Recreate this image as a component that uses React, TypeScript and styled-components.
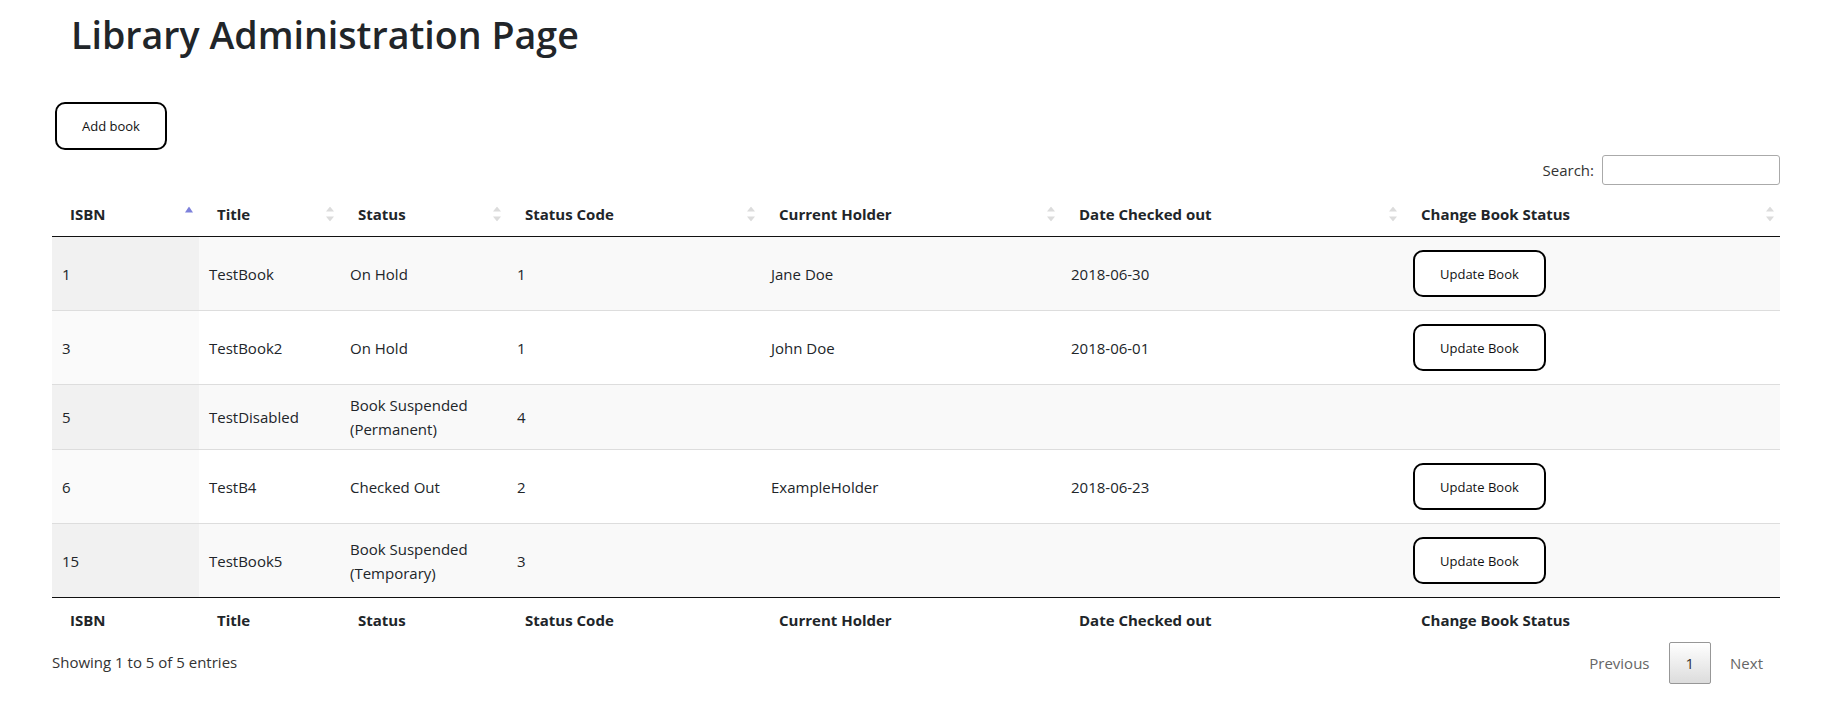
import React from "react";
import styled, { createGlobalStyle } from "styled-components";

const GlobalStyle = createGlobalStyle`
  html, body {
    margin: 0;
    padding: 0;
    background: #ffffff;
  }
  body {
    font-family: "Open Sans", "Noto Sans", sans-serif;
    font-size: 15px;
    line-height: 24px;
    color: #212529;
  }
  * { box-sizing: border-box; }
`;

const Page = styled.div`
  padding: 0 44px 0 52px;
`;

const Title = styled.h1`
  margin: 0;
  padding: 9px 0 0 19px;
  font-size: 37.6px;
  font-weight: 600;
  line-height: 52px;
  color: #212529;
`;

const Toolbar = styled.div`
  display: flex;
  margin-top: 41px;
  padding-left: 3px;
`;

const OutlineButton = styled.button`
  height: 48px;
  padding: 0 25px;
  border: 2px solid #000;
  border-radius: 10px;
  background: #fff;
  font-family: "Open Sans", "Noto Sans", sans-serif;
  font-size: 13px;
  color: #111;
  cursor: pointer;
`;

const RowButton = styled(OutlineButton)`
  height: 47px;
  margin: 5px 0;
  display: block;
`;

const FilterRow = styled.div`
  display: flex;
  justify-content: flex-end;
  align-items: center;
  gap: 8px;
  margin-top: 5px;
  margin-bottom: 7px;
`;

const SearchLabel = styled.label`
  color: #333;
`;

const SearchInput = styled.input`
  width: 178px;
  height: 30px;
  border: 1px solid #aaa;
  border-radius: 3px;
  padding: 5px;
  background: transparent;
  font-family: inherit;
`;

const Table = styled.table`
  width: 100%;
  table-layout: fixed;
  border-collapse: separate;
  border-spacing: 0;
`;

const HeadCell = styled.th`
  position: relative;
  padding: 10px 18px;
  text-align: left;
  font-weight: 700;
  line-height: 24px;
  color: #212529;
  border-bottom: 1px solid #111;
  white-space: nowrap;
`;

const SortMark = styled.svg`
  position: absolute;
  right: 6px;
  top: 50%;
  transform: translateY(-50%);
`;

const BodyRow = styled.tr<{ $odd: boolean }>`
  background: ${(p) => (p.$odd ? "#f9f9f9" : "#ffffff")};
`;

const Cell = styled.td<{ $sorted?: boolean; $odd: boolean; $first: boolean }>`
  padding: 8px 10px;
  vertical-align: middle;
  line-height: 24px;
  border-top: ${(p) => (p.$first ? "none" : "1px solid #ddd")};
  background: ${(p) =>
    p.$sorted ? (p.$odd ? "#f1f1f1" : "#fafafa") : "transparent"};
`;

const ButtonCell = styled(Cell)`
  height: 73px;
`;

const FootCell = styled.th`
  padding: 10px 18px 6px;
  text-align: left;
  font-weight: 700;
  line-height: 24px;
  color: #212529;
  border-top: 1px solid #111;
  white-space: nowrap;
`;

const BottomBar = styled.div`
  display: flex;
  justify-content: space-between;
  align-items: flex-start;
`;

const Info = styled.div`
  padding-top: 12px;
  color: #333;
`;

const Pager = styled.div`
  display: flex;
  padding-top: 4px;
`;

const PageButton = styled.span<{ $current?: boolean }>`
  display: inline-block;
  padding: 8px 16px;
  margin-left: 2px;
  line-height: 24px;
  border: 1px solid ${(p) => (p.$current ? "#979797" : "transparent")};
  border-radius: 2px;
  color: ${(p) => (p.$current ? "#333" : "#666")};
  background: ${(p) =>
    p.$current ? "linear-gradient(to bottom, #ffffff 0%, #dcdcdc 100%)" : "transparent"};
  cursor: default;
`;

type SortKind = "asc" | "both";

const SortIcon: React.FC<{ kind: SortKind }> = ({ kind }) => (
  <SortMark width="8" height="15" viewBox="0 0 8 15" aria-hidden="true">
    {kind === "asc" ? (
      <polygon points="0,6 4,0 8,6" fill="#7d81db" />
    ) : (
      <>
        <polygon points="0,5 4,0 8,5" fill="#dcdcdc" />
        <polygon points="0,10 8,10 4,15" fill="#dcdcdc" />
      </>
    )}
  </SortMark>
);

const columns = [
  { label: "ISBN", width: 147 },
  { label: "Title", width: 141 },
  { label: "Status", width: 167 },
  { label: "Status Code", width: 254 },
  { label: "Current Holder", width: 300 },
  { label: "Date Checked out", width: 342 },
  { label: "Change Book Status", width: 377 },
];

type Book = {
  isbn: string;
  title: string;
  status: string;
  code: string;
  holder: string;
  date: string;
  updatable: boolean;
};

const books: Book[] = [
  { isbn: "1", title: "TestBook", status: "On Hold", code: "1", holder: "Jane Doe", date: "2018-06-30", updatable: true },
  { isbn: "3", title: "TestBook2", status: "On Hold", code: "1", holder: "John Doe", date: "2018-06-01", updatable: true },
  { isbn: "5", title: "TestDisabled", status: "Book Suspended (Permanent)", code: "4", holder: "", date: "", updatable: false },
  { isbn: "6", title: "TestB4", status: "Checked Out", code: "2", holder: "ExampleHolder", date: "2018-06-23", updatable: true },
  { isbn: "15", title: "TestBook5", status: "Book Suspended (Temporary)", code: "3", holder: "", date: "", updatable: true },
];

export default function App() {
  return (
    <>
      <GlobalStyle />
      <Page>
        <Title>Library Administration Page</Title>
        <Toolbar>
          <OutlineButton type="button">Add book</OutlineButton>
        </Toolbar>
        <FilterRow>
          <SearchLabel htmlFor="search">Search:</SearchLabel>
          <SearchInput id="search" type="search" />
        </FilterRow>
        <Table>
          <colgroup>
            {columns.map((c) => (
              <col key={c.label} style={{ width: c.width }} />
            ))}
          </colgroup>
          <thead>
            <tr>
              {columns.map((c, i) => (
                <HeadCell key={c.label}>
                  {c.label}
                  <SortIcon kind={i === 0 ? "asc" : "both"} />
                </HeadCell>
              ))}
            </tr>
          </thead>
          <tbody>
            {books.map((b, i) => {
              const odd = i % 2 === 0;
              const first = i === 0;
              return (
                <BodyRow key={b.isbn} $odd={odd}>
                  <Cell $sorted $odd={odd} $first={first}>{b.isbn}</Cell>
                  <Cell $odd={odd} $first={first}>{b.title}</Cell>
                  <Cell $odd={odd} $first={first}>{b.status}</Cell>
                  <Cell $odd={odd} $first={first}>{b.code}</Cell>
                  <Cell $odd={odd} $first={first}>{b.holder}</Cell>
                  <Cell $odd={odd} $first={first}>{b.date}</Cell>
                  {b.updatable ? (
                    <ButtonCell $odd={odd} $first={first}>
                      <RowButton type="button">Update Book</RowButton>
                    </ButtonCell>
                  ) : (
                    <Cell $odd={odd} $first={first} />
                  )}
                </BodyRow>
              );
            })}
          </tbody>
          <tfoot>
            <tr>
              {columns.map((c) => (
                <FootCell key={c.label}>{c.label}</FootCell>
              ))}
            </tr>
          </tfoot>
        </Table>
        <BottomBar>
          <Info>Showing 1 to 5 of 5 entries</Info>
          <Pager>
            <PageButton>Previous</PageButton>
            <PageButton $current>1</PageButton>
            <PageButton>Next</PageButton>
          </Pager>
        </BottomBar>
      </Page>
    </>
  );
}
